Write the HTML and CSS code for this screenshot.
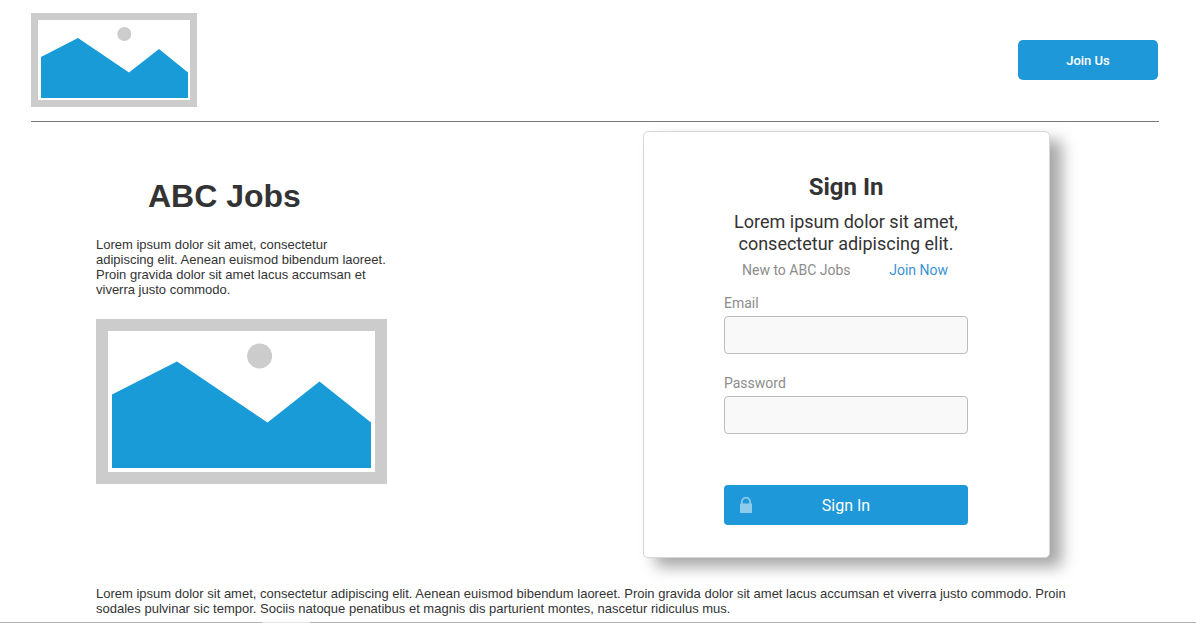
FILE: index.html
```html
<!DOCTYPE html>
<html lang="en">
<head>
<meta charset="utf-8">
<meta name="viewport" content="width=device-width, initial-scale=1">
<title>ABC Jobs</title>
<link rel="stylesheet" href="styles.css">
</head>
<body>
<div class="page">
  <header class="header">
    <svg class="picture logo" viewBox="0 0 152 80" role="img" aria-label="Logo">
      <path class="hills" d="M3 37L40 18L91 52.500L121 29L150 52.500V78H3Z"/>
      <circle class="sun" cx="86.300" cy="14" r="7"/>
    </svg>
    <button class="btn join-btn" type="button">Join Us</button>
  </header>

  <main class="main">
    <section class="intro">
      <h1 class="title">ABC Jobs</h1>
      <p class="text">Lorem ipsum dolor sit amet, consectetur adipiscing elit. Aenean euismod bibendum laoreet. Proin gravida dolor sit amet lacus accumsan et viverra justo commodo.</p>
      <svg class="picture photo" viewBox="0 0 267 141" role="img" aria-label="Picture">
        <path class="hills" d="M4 63.500L69 30.500L159.500 91.500L211.500 50.500L263 91.500V137H4Z"/>
        <circle class="sun" cx="151.600" cy="25" r="12.500"/>
      </svg>
    </section>

    <form class="card">
      <h2 class="card-title">Sign In</h2>
      <p class="lead">Lorem ipsum dolor sit amet, consectetur adipiscing elit.</p>
      <div class="join-row">
        <span>New to ABC Jobs</span>
        <a class="join-link" href="#">Join Now</a>
      </div>
      <div class="field">
        <label for="email">Email</label>
        <input class="input" id="email" type="email">
      </div>
      <div class="field">
        <label for="password">Password</label>
        <input class="input" id="password" type="password">
      </div>
      <button class="btn sign-btn" type="submit">
        <svg class="lock" viewBox="0 0 12 16" aria-hidden="true">
          <path d="M0 6.500H1V5.500C1 2 3 0 6 0S11 2 11 5.500V6.500H12V16H0ZM2.600 6.500H9.400V5.500C9.400 3 8 1.600 6 1.600S2.600 3 2.600 5.500Z"/>
        </svg>
        <span>Sign In</span>
      </button>
    </form>
  </main>

  <p class="text closing">Lorem ipsum dolor sit amet, consectetur adipiscing elit. Aenean euismod bibendum laoreet. Proin gravida dolor sit amet lacus accumsan et viverra justo commodo. Proin sodales pulvinar sic tempor. Sociis natoque penatibus et magnis dis parturient montes, nascetur ridiculus mus.</p>
</div>
<div class="bottom-rule"></div>
</body>
</html>
```
FILE: styles.css
```css
* {
  box-sizing: border-box;
}

body {
  margin: 0;
  background: #fff;
  color: #333;
  font-family: "Liberation Sans", Arial, sans-serif;
  font-size: 13px;
  line-height: 15px;
}

h1, h2, p {
  margin: 0;
}

.page {
  padding: 13px 37px 0 31px;
}

.header {
  display: flex;
  align-items: center;
  justify-content: space-between;
  padding: 0 1px 14px 0;
  border-bottom: 1px solid #797979;
}

.picture {
  display: block;
  border: solid #ccc;
}

.hills {
  fill: #189bd7;
}

.sun {
  fill: #ccc;
}

.logo {
  width: 166px;
  height: 94px;
  border-width: 7px;
}

.btn {
  height: 40px;
  border: 0;
  border-radius: 5px;
  background: #1f98d9;
  color: #fff;
  font-family: Roboto, sans-serif;
  cursor: pointer;
}

.join-btn {
  width: 140px;
  font-size: 13px;
  font-weight: 500;
}

.main {
  display: flex;
  align-items: flex-start;
  justify-content: space-between;
  padding: 9px 109px 0 65px;
}

.intro {
  width: 291px;
  padding-top: 47px;
}

.title {
  padding-left: 52px;
  font-size: 32px;
  line-height: 37px;
}

.intro .text {
  margin: 22px 0;
}

.photo {
  width: 100%;
  border-width: 12px;
}

.card {
  display: flex;
  flex-direction: column;
  width: 407px;
  padding: 40px 81px 32px 80px;
  border: 1px solid #d7d7d7;
  border-radius: 5px;
  background: #fff;
  box-shadow: 12px 9px 15px rgba(0, 0, 0, 0.35);
  color: #333;
  font-family: Roboto, sans-serif;
}

.card-title {
  font-size: 24px;
  line-height: 30px;
  text-align: center;
}

.lead {
  margin-top: 9px;
  font-size: 18px;
  line-height: 22px;
  text-align: center;
}

.join-row {
  display: flex;
  justify-content: space-between;
  padding: 6px 20px 0 18px;
  color: #8c8c8c;
  font-size: 14px;
  line-height: 18px;
}

.join-link {
  color: #3b92d4;
  text-decoration: none;
}

.field {
  display: flex;
  flex-direction: column;
  gap: 4px;
  margin-top: 15px;
  color: #8c8c8c;
  font-size: 14px;
  line-height: 18px;
}

.field + .field {
  margin-top: 20px;
}

.input {
  width: 100%;
  height: 38px;
  padding: 0 10px;
  border: 1px solid #bcbcbc;
  border-radius: 4px;
  background: #f9f9f9;
  font: inherit;
}

.sign-btn {
  display: grid;
  grid-template-columns: 12px 1fr 12px;
  align-items: center;
  margin-top: 51px;
  padding: 0 16px;
  border-radius: 4px;
  font-size: 16px;
}

.lock {
  width: 12px;
  height: 16px;
  fill: #8fccec;
}

.closing {
  max-width: 1050px;
  padding: 0 0 0 65px;
  margin-top: 28px;
}

.bottom-rule {
  height: 1px;
  margin-top: 6px;
  background: linear-gradient(to right, #b1b1b1 262px, #e4e4e4 262px 310px, #b1b1b1 310px);
}
```
